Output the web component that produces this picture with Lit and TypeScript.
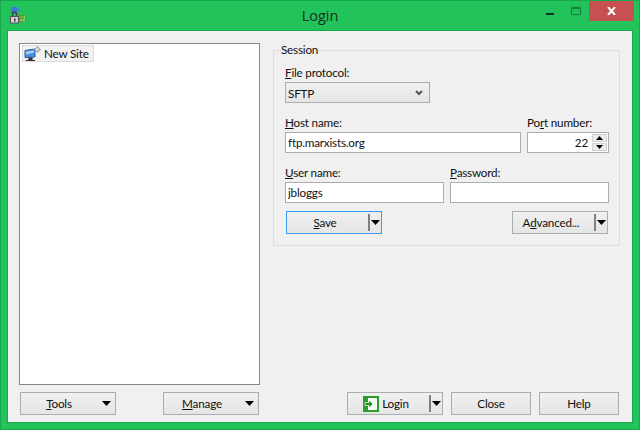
import { LitElement, html, css, svg } from "lit";
import { customElement } from "lit/decorators.js";

const caret = html`<svg class="caret" width="9" height="5" viewBox="0 0 9 5"><path d="M0 0H9L4.5 5Z" fill="#000"/></svg>`;

@customElement("app-root")
export class AppRoot extends LitElement {
  static styles = css`
    :host { display: block; width: 640px; height: 430px; overflow: hidden; font-family: "Lato", "Open Sans", sans-serif; font-size: 11.7px; letter-spacing: -0.2px; color: #111; }
    * { box-sizing: border-box; }
    .win { width: 640px; height: 430px; background: #22c35b; border: 1px solid #17a84c; display: flex; flex-direction: column; }
    .title { height: 29px; display: grid; grid-template-columns: 120px 1fr 120px; flex: none; }
    .ticon { padding: 6px 0 0 9px; }
    .ttext { text-align: center; font-family: "Open Sans", sans-serif; font-size: 14.5px; letter-spacing: 0; line-height: 30px; color: #16301f; }
    .ctrls { display: flex; justify-content: flex-end; margin-right: 5px; height: 20px; }
    .ctl { width: 26px; height: 20px; display: flex; align-items: center; justify-content: center; }
    .ctl.close { width: 45px; background: #c75050; }
    .client { flex: none; width: 626px; height: 393px; margin-left: 6px; border: 1px solid #17a84c; background: #f0f0f0; padding: 12px 12px 7px 11px; display: grid; grid-template-columns: 241px 347px; column-gap: 13px; }
    .left, .right { display: flex; flex-direction: column; height: 372px; justify-content: space-between; }
    .tree { height: 342px; background: #fff; border: 1px solid #828790; padding: 1px 0 0 2px; }
    .node { display: inline-flex; align-items: center; height: 17px; border: 1px solid #dadada; background: #f2f2f2; padding: 0 4px 0 1px; gap: 3px; }
    .node span { padding-bottom: 2px; }
    .row { display: flex; }
    .lrow { margin: 0 1px; justify-content: space-between; }
    .rrow { gap: 8px; justify-content: flex-end; margin-right: 1px; }
    .btn { height: 23px; width: 96px; border: 1px solid #acacac; background: linear-gradient(#f0f0f0, #e5e5e5); display: flex; align-items: center; flex: none; }
    .btn span { padding-bottom: 2px; }
    .btn.plain { width: 80px; justify-content: center; }
    .btn.focus { border-color: #3c9bf0; width: 96px; }
    .main { flex: 1; display: flex; justify-content: center; align-items: center; gap: 3px; padding-right: 5px; }
    .sep { width: 2px; height: 17px; background: #7f7f7f; flex: none; }
    .caretwrap { width: 9px; flex: none; display: flex; margin: 0 1px; }
    .caretwrap.wide { margin: 0 4px 0 0; }
    fieldset { margin: 0; padding: 0 10px 0 11px; height: 203px; border: 1px solid #dcdcdc; min-width: 0; }
    legend { padding: 0; margin-left: -4px; line-height: 12px; height: 14px; }
    .f { display: grid; grid-template-columns: 236px 82px; column-gap: 6px; }
    .g2 { display: grid; grid-template-columns: 159px 159px; column-gap: 6px; }
    .lbl { height: 15px; line-height: 15px; margin-bottom: 2px; white-space: nowrap; }
    .proto { margin-top: 8px; }
    .sel { width: 145px; height: 21px; border: 1px solid #acacac; background: linear-gradient(#f0f0f0, #e5e5e5); display: flex; align-items: center; justify-content: space-between; padding: 0 6px 0 2px; }
    .host { margin-top: 12px; }
    .users { margin-top: 12px; }
    input { display: block; width: 100%; height: 21px; border: 1px solid #abadb3; padding: 0 2px 2px; margin: 0; font: inherit; letter-spacing: inherit; color: inherit; background: #fff; outline: none; }
    .port { display: flex; align-items: center; height: 21px; border: 1px solid #abadb3; background: #fff; justify-content: flex-end; padding-right: 1px; gap: 4px; }
    .port span { padding-bottom: 2px; }
    .spin { display: flex; flex-direction: column; gap: 1px; }
    .sb { width: 15px; height: 8px; background: #ececec; border: 1px solid #d2d2d2; display: flex; align-items: center; justify-content: center; }
    .actions { display: flex; justify-content: space-between; margin: 8px 1px 0 1px; }
    u { text-decoration-thickness: 1px; text-underline-offset: 1px; }
  `;

  private splitBtn(label: unknown, cls = "") {
    return html`<div class="btn ${cls}"><div class="main">${label}</div><div class="sep"></div><div class="caretwrap">${caret}</div></div>`;
  }

  private menuBtn(label: unknown) {
    return html`<div class="btn"><div class="main">${label}</div><div class="caretwrap wide">${caret}</div></div>`;
  }

  render() {
    return html`<div class="win">
      <div class="title">
        <div class="ticon">
          <svg width="17" height="17" viewBox="0 0 17 17">
            <rect x="1" y="0" width="6" height="7" fill="#3b78d8"/>
            <path d="M7 1l2 3" stroke="#3b78d8" stroke-width="2"/>
            <path d="M9.500 8.500h6v6h-6z" fill="#8fce5f" stroke="#5a9e35"/>
            <path d="M8 7l5 5M13 8v4H9" stroke="#3f8f28" fill="none"/>
            <path d="M2.500 9V7a2 2 0 0 1 4 0v2" fill="none" stroke="#444" stroke-width="1.300"/>
            <rect x=".5" y="9.500" width="8" height="6.500" fill="#d0d0da" stroke="#555"/>
            <rect x="4" y="11.500" width="1.500" height="3" fill="#333"/>
          </svg>
        </div>
        <div class="ttext">Login</div>
        <div class="ctrls">
          <div class="ctl"><svg width="10" height="10" viewBox="0 0 10 10"><rect x="1" y="7" width="8" height="2" fill="#16301f"/></svg></div>
          <div class="ctl"><svg width="10" height="8" viewBox="0 0 10 8"><path d="M.5.500h9v7h-9z" fill="none" stroke="#1b7f44"/><path d="M0 1.500h10" stroke="#1b7f44"/></svg></div>
          <div class="ctl close"><svg width="9" height="8" viewBox="0 0 9 8"><path d="M1 0l7 8M8 0L1 8" stroke="#fff" stroke-width="2" fill="none"/></svg></div>
        </div>
      </div>
      <div class="client">
        <div class="left">
          <div class="tree">
            <div class="node">
              <svg width="17" height="16" viewBox="0 0 17 16">
                ${svg`<path d="M1 4.500L11 3v8L1 11.500z" fill="#4a8fe0" stroke="#2d5c9c"/>
                <path d="M2 5.500l8-1v2l-8 2z" fill="#a9d0f5"/>
                <path d="M5 12h3v2H5zM2 14.500h9" stroke="#333" stroke-width="1.200" fill="#333"/>
                <circle cx="13.500" cy="3.500" r="2.200" fill="#d8dce2" stroke="#98a0aa"/>
                <path d="M13.500 0v1.300M13.500 5.700V7M10 3.500h1.300M15.700 3.500H17" stroke="#a4abb4"/>`}
              </svg>
              <span>New Site</span>
            </div>
          </div>
          <div class="row lrow">
            ${this.menuBtn(html`<span><u>T</u>ools</span>`)}
            ${this.menuBtn(html`<span><u>M</u>anage</span>`)}
          </div>
        </div>
        <div class="right">
          <fieldset>
            <legend>Session</legend>
            <div class="proto">
              <div class="lbl"><u>F</u>ile protocol:</div>
              <div class="sel"><span>SFTP</span>
                <svg width="8" height="6" viewBox="0 0 8 6"><path d="M1 1l3 3 3-3" stroke="#555" stroke-width="2" fill="none"/></svg>
              </div>
            </div>
            <div class="f host">
              <div><div class="lbl"><u>H</u>ost name:</div><input value="ftp.marxists.org" /></div>
              <div><div class="lbl">Po<u>r</u>t number:</div>
                <div class="port"><span>22</span>
                  <div class="spin">
                    <div class="sb"><svg width="7" height="4" viewBox="0 0 7 4"><path d="M0 4h7L3.500 0z" fill="#000"/></svg></div>
                    <div class="sb"><svg width="7" height="4" viewBox="0 0 7 4"><path d="M0 0h7L3.500 4z" fill="#000"/></svg></div>
                  </div>
                </div>
              </div>
            </div>
            <div class="g2 users">
              <div><div class="lbl"><u>U</u>ser name:</div><input value="jbloggs" /></div>
              <div><div class="lbl"><u>P</u>assword:</div><input value="" /></div>
            </div>
            <div class="actions">
              ${this.splitBtn(html`<span><u>S</u>ave</span>`, "focus")}
              ${this.splitBtn(html`<span>A<u>d</u>vanced...</span>`)}
            </div>
          </fieldset>
          <div class="row rrow">
            ${this.splitBtn(html`
              <svg width="16" height="16" viewBox="0 0 16 16">
                <rect width="16" height="16" fill="#2a9d2a"/>
                <path d="M5 2.500h8.500v11H5" fill="#f4fbf2" stroke="#fff"/>
                <path d="M2 6.500h4V4l4 4-4 4V9.500H2z" fill="#1f8a1f" stroke="#fff" stroke-width=".7"/>
              </svg><span>Login</span>`)}
            <div class="btn plain"><span>Close</span></div>
            <div class="btn plain"><span>Help</span></div>
          </div>
        </div>
      </div>
    </div>`;
  }
}
